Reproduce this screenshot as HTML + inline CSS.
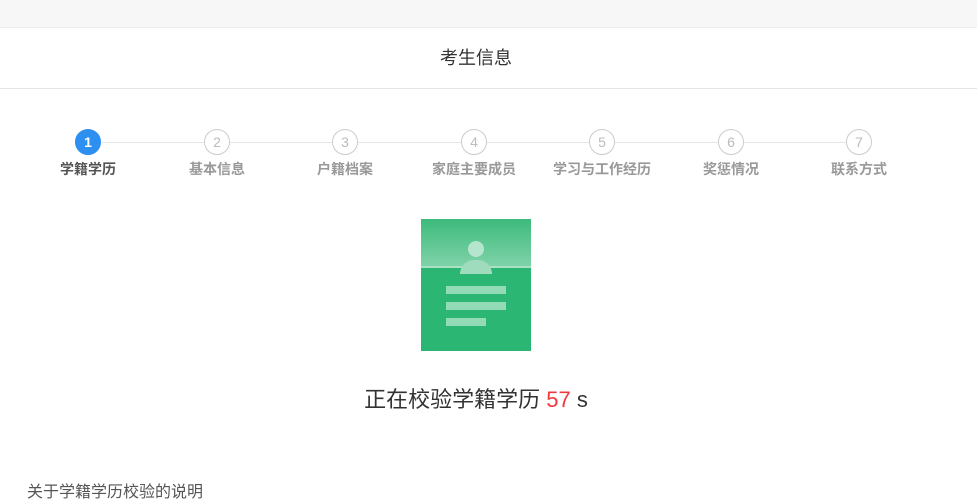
<!DOCTYPE html>
<html><head><meta charset="utf-8"><style>
*{margin:0;padding:0;box-sizing:border-box}
body{width:977px;height:484px;overflow:hidden;background:#fff;font-family:"Liberation Sans","Noto Sans CJK SC",sans-serif;position:relative}
.top{position:absolute;left:0;top:0;width:977px;height:28px;background:#f7f7f7;border-bottom:1px solid #eee}
.hdr{position:absolute;left:0;top:29px;width:952px;height:60px;text-align:center;line-height:59px;font-size:18px;color:#333}
.hl{position:absolute;left:0;top:88px;width:977px;height:1px;background:#e5e5e5}
.line{position:absolute;top:142px;height:1px;background:#e5e5e5}
.c{position:absolute;top:129px;width:26px;height:26px;border-radius:50%;border:1px solid #ccc;color:#bbb;font-size:14px;text-align:center;line-height:24px;background:#fff}
.c.a{background:#2d8ff0;border-color:#2d8ff0;color:#fff;font-weight:bold}
.l{position:absolute;top:159px;width:140px;text-align:center;font-size:14px;font-weight:bold;color:#999}
.l.a{color:#555}
.card{position:absolute;left:421px;top:219px;width:110px;height:132px;background:#2bb673;overflow:hidden}
.band{position:absolute;left:0;top:0;width:110px;height:49px;background:linear-gradient(#3dba7c,#7fd2a8);border-bottom:2px solid #a9e0c4}
.head{position:absolute;left:47px;top:22px;width:16px;height:16px;border-radius:50%;background:#b5e6cd}
.body{position:absolute;left:39px;top:41px;width:32px;height:14px;border-radius:16px 16px 0 0;background:#9fdcbd}
.bar{position:absolute;left:25px;height:8px;background:#93dbb6}
.msg{position:absolute;left:0;top:382px;width:952px;text-align:center;font-size:22px;color:#333}
.msg span{color:#f0383f}
.note{position:absolute;left:27px;top:478px;font-size:16px;color:#555}
</style></head><body>
<div class="top"></div>
<div class="hdr">考生信息</div>
<div class="hl"></div>
<div class="line" style="left:102px;width:770px"></div>
<div class="c a" style="left:75px">1</div>
<div class="c" style="left:204px">2</div>
<div class="c" style="left:332px">3</div>
<div class="c" style="left:461px">4</div>
<div class="c" style="left:589px">5</div>
<div class="c" style="left:718px">6</div>
<div class="c" style="left:846px">7</div>
<div class="l a" style="left:18px">学籍学历</div>
<div class="l" style="left:147px">基本信息</div>
<div class="l" style="left:275px">户籍档案</div>
<div class="l" style="left:404px">家庭主要成员</div>
<div class="l" style="left:532px">学习与工作经历</div>
<div class="l" style="left:661px">奖惩情况</div>
<div class="l" style="left:789px">联系方式</div>
<div class="card"><div class="band"></div><div class="head"></div><div class="body"></div>
<div class="bar" style="top:67px;width:60px"></div>
<div class="bar" style="top:83px;width:60px"></div>
<div class="bar" style="top:99px;width:40px"></div></div>
<div class="msg">正在校验学籍学历 <span>57</span> s</div>
<div class="note">关于学籍学历校验的说明</div>
</body></html>
